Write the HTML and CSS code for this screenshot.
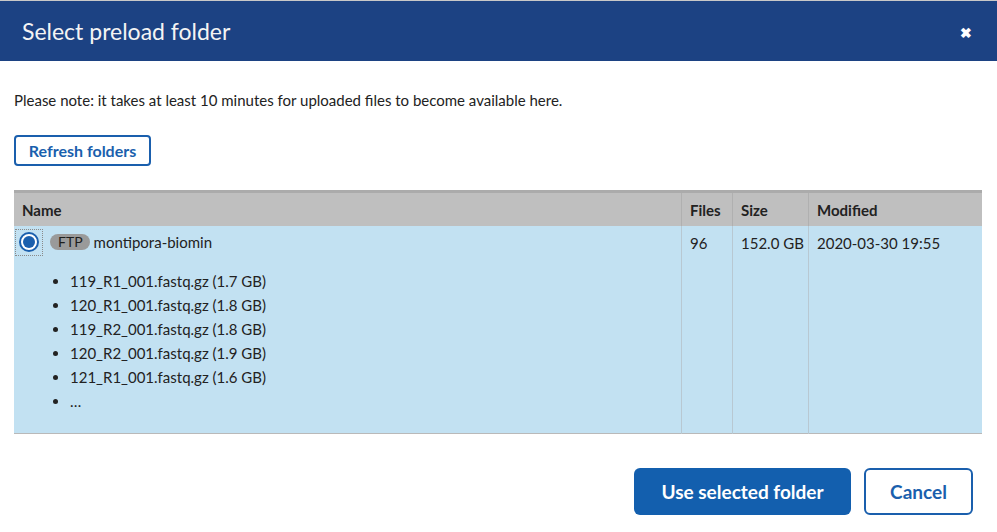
FILE: index.html
```html
<!DOCTYPE html>
<html>
<head>
<meta charset="utf-8">
<link rel="stylesheet" href="styles.css">
</head>
<body>
<div class="dialog">
  <div class="header">
    <h1 class="title">Select preload folder</h1>
    <span class="close">&#x2716;</span>
  </div>
  <div class="body">
    <p class="note">Please note: it takes at least 10 minutes for uploaded files to become available here.</p>
    <button class="btn-outline btn-small">Refresh folders</button>
    <table class="folders">
      <thead>
        <tr>
          <th class="col-name">Name</th>
          <th class="col-files">Files</th>
          <th class="col-size">Size</th>
          <th class="col-mod">Modified</th>
        </tr>
      </thead>
      <tbody>
        <tr class="selected">
          <td class="col-name">
            <div class="name-line">
              <span class="radio-wrap"><span class="radio"><span class="dot"></span></span></span>
              <span class="badge">FTP</span>
              <span class="folder">montipora-biomin</span>
            </div>
            <ul class="files">
              <li>119_R1_001.fastq.gz (1.7 GB)</li>
              <li>120_R1_001.fastq.gz (1.8 GB)</li>
              <li>119_R2_001.fastq.gz (1.8 GB)</li>
              <li>120_R2_001.fastq.gz (1.9 GB)</li>
              <li>121_R1_001.fastq.gz (1.6 GB)</li>
              <li>…</li>
            </ul>
          </td>
          <td class="col-files">96</td>
          <td class="col-size">152.0 GB</td>
          <td class="col-mod">2020-03-30 19:55</td>
        </tr>
      </tbody>
    </table>
  </div>
  <div class="footer">
    <button class="btn-primary">Use selected folder</button>
    <button class="btn-outline btn-large">Cancel</button>
  </div>
</div>
</body>
</html>
```

FILE: styles.css
```css
html, body {
  margin: 0;
  padding: 0;
  background: #ffffff;
}

body {
  font-family: "Lato", "Liberation Sans", sans-serif;
  color: #222222;
  font-size: 15px;
}

.dialog {
  width: 997px;
  height: 532px;
  border-top: 1px solid #c8c8c8;
  box-sizing: border-box;
}

.header {
  height: 60px;
  background: #1c4283;
  display: flex;
  align-items: center;
  justify-content: space-between;
  padding: 0 22px;
}

.title {
  margin: 0;
  font-size: 23px;
  font-weight: 400;
  color: #f4f4f4;
  letter-spacing: 0;
}

.close {
  color: #ffffff;
  font-size: 14px;
  font-weight: bold;
  margin-right: 3px;
  margin-top: 2px;
}

.body {
  padding: 0 15px 0 14px;
}

.note {
  margin: 30px 0 0 0;
  line-height: 18px;
  font-size: 15px;
  color: #222;
}

.btn-outline {
  background: #ffffff;
  border: 2px solid #1a5fad;
  color: #1a5fad;
  font-family: inherit;
  font-weight: 700;
  cursor: pointer;
  padding: 0;
}

.btn-small {
  margin-top: 26px;
  width: 137px;
  height: 31px;
  border-radius: 4px;
  font-size: 16px;
}

.folders {
  margin-top: 24px;
  width: 968px;
  table-layout: fixed;
  border-collapse: collapse;
  border-top: 3px solid #ababab;
  border-bottom: 1px solid #b9b9b9;
}

.folders th {
  background: #bfbfbf;
  text-align: left;
  font-weight: 700;
  height: 33px;
  padding: 0 8px;
  font-size: 15px;
  color: #222;
  border-left: 1px solid #b0b0b0;
  white-space: nowrap;
}

.folders td {
  background: #c2e1f2;
  vertical-align: top;
  padding: 8px 8px 0 8px;
  line-height: 18px;
  border-left: 1px solid #b8c8d2;
  font-size: 15px;
  white-space: nowrap;
}

.folders th:first-child,
.folders td:first-child {
  border-left: none;
}

.folders td.col-name {
  padding: 2px 8px 0 1px;
}

.folders th.col-files { width: 34px; }
.folders th.col-size { width: 59px; }
.folders th.col-mod { width: 157px; }

.name-line {
  display: flex;
  align-items: center;
  height: 28px;
}

.radio-wrap {
  width: 26px;
  height: 25px;
  border: 1px dotted #8a8a8a;
  display: flex;
  align-items: center;
  justify-content: center;
  margin-right: 7px;
}

.radio {
  width: 16px;
  height: 16px;
  border: 2px solid #1a5fad;
  border-radius: 50%;
  background: #ffffff;
  display: flex;
  align-items: center;
  justify-content: center;
}

.dot {
  width: 12px;
  height: 12px;
  background: #1a5fad;
  border-radius: 50%;
}

.badge {
  background: #9a9a9a;
  color: #1e1e1e;
  font-size: 14px;
  border-radius: 8px;
  padding: 0 7px 0 8px;
  line-height: 16px;
  margin-right: 4px;
}

.folder {
  color: #222;
}

.files {
  margin: 13px 0 20px 0;
  padding-left: 55px;
  list-style: disc;
}

.files li {
  line-height: 24px;
  height: 24px;
}

.footer {
  display: flex;
  justify-content: flex-end;
  gap: 13px;
  padding: 34px 24px 0 0;
}

.btn-primary {
  width: 217px;
  height: 47px;
  background: #135fae;
  color: #ffffff;
  border: none;
  border-radius: 6px;
  font-family: inherit;
  font-size: 19px;
  font-weight: 700;
  padding: 0;
}

.btn-large {
  width: 109px;
  height: 47px;
  border-radius: 6px;
  font-size: 19px;
}
```
